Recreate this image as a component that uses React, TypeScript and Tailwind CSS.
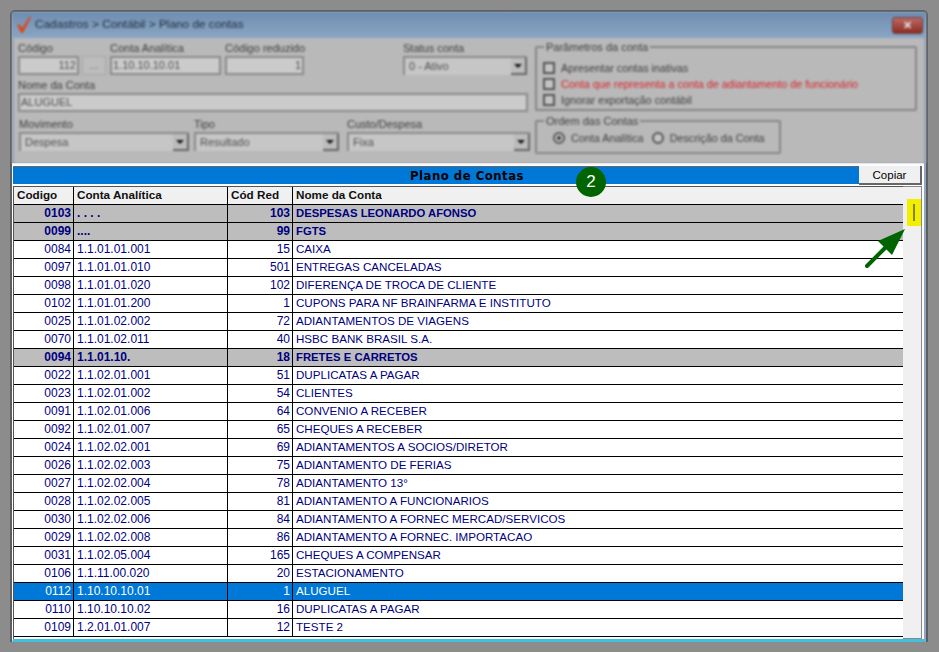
const rows: [string, string, string, string, string?][] = [
  ["0103", ". . . .", "103", "DESPESAS LEONARDO AFONSO", "b"],
  ["0099", "....", "99", "FGTS", "b"],
  ["0084", "1.1.01.01.001", "15", "CAIXA"],
  ["0097", "1.1.01.01.010", "501", "ENTREGAS CANCELADAS"],
  ["0098", "1.1.01.01.020", "102", "DIFERENÇA DE TROCA DE CLIENTE"],
  ["0102", "1.1.01.01.200", "1", "CUPONS PARA NF BRAINFARMA E INSTITUTO"],
  ["0025", "1.1.01.02.002", "72", "ADIANTAMENTOS DE VIAGENS"],
  ["0070", "1.1.01.02.011", "40", "HSBC BANK BRASIL S.A."],
  ["0094", "1.1.01.10.", "18", "FRETES E CARRETOS", "b"],
  ["0022", "1.1.02.01.001", "51", "DUPLICATAS A PAGAR"],
  ["0023", "1.1.02.01.002", "54", "CLIENTES"],
  ["0091", "1.1.02.01.006", "64", "CONVENIO A RECEBER"],
  ["0092", "1.1.02.01.007", "65", "CHEQUES A RECEBER"],
  ["0024", "1.1.02.02.001", "69", "ADIANTAMENTOS A SOCIOS/DIRETOR"],
  ["0026", "1.1.02.02.003", "75", "ADIANTAMENTO DE FERIAS"],
  ["0027", "1.1.02.02.004", "78", "ADIANTAMENTO 13°"],
  ["0028", "1.1.02.02.005", "81", "ADIANTAMENTO A FUNCIONARIOS"],
  ["0030", "1.1.02.02.006", "84", "ADIANTAMENTO A FORNEC MERCAD/SERVICOS"],
  ["0029", "1.1.02.02.008", "86", "ADIANTAMENTO A FORNEC. IMPORTACAO"],
  ["0031", "1.1.02.05.004", "165", "CHEQUES A COMPENSAR"],
  ["0106", "1.1.11.00.020", "20", "ESTACIONAMENTO"],
  ["0112", "1.10.10.10.01", "1", "ALUGUEL", "s"],
  ["0110", "1.10.10.10.02", "16", "DUPLICATAS A PAGAR"],
  ["0109", "1.2.01.01.007", "12", "TESTE 2"],
];

function Field({ label, value, right, className }: { label: string; value: string; right?: boolean; className: string }) {
  return (
    <div className={className}>
      <div className="h-[14px] whitespace-nowrap text-[11px] leading-[13px] text-[#3d3d3d]">{label}</div>
      <div className={`flex h-[19px] items-center border-2 border-[#8a8a8a] bg-[#cbcbcb] px-[1px] text-[11px] text-[#505050] ${right ? "justify-end" : ""}`}>
        {value}
      </div>
    </div>
  );
}

function Combo({ label, value, className }: { label: string; value: string; className: string }) {
  return (
    <div className={className}>
      <div className="h-[14px] whitespace-nowrap text-[11px] leading-[13px] text-[#3d3d3d]">{label}</div>
      <div className="flex h-[19px] items-center border-t-2 border-l-2 border-[#8a8a8a] bg-[#c6c6c6] pl-1 text-[11px] text-[#505050]">
        <span className="flex-1">{value}</span>
        <span className="flex h-[17px] w-[16px] items-center justify-center border-r-2 border-b-2 border-[#666] bg-[#bcbcbc]">
          <span className="h-0 w-0 border-x-[4px] border-t-[4px] border-x-transparent border-t-[#111]" />
        </span>
      </div>
    </div>
  );
}

function Check({ label, red }: { label: string; red?: boolean }) {
  return (
    <div className="flex h-[16px] items-center gap-[6px]">
      <span className="h-[12px] w-[12px] border-2 border-[#555] bg-[#c4c4c4]" />
      <span className={`whitespace-nowrap text-[10.8px] ${red ? "text-[#d9232e]" : "text-[#3d3d3d]"}`}>{label}</span>
    </div>
  );
}

function Radio({ label, on }: { label: string; on?: boolean }) {
  return (
    <div className="flex items-center gap-[6px]">
      <span className="flex h-[12px] w-[12px] items-center justify-center rounded-full border-2 border-[#555] bg-[#c4c4c4]">
        {on && <span className="h-[4px] w-[4px] rounded-full bg-[#333]" />}
      </span>
      <span className="whitespace-nowrap text-[10.8px] text-[#3d3d3d]">{label}</span>
    </div>
  );
}

const cols = "grid grid-cols-[60px_154px_65px_610px]";

export default function App() {
  return (
    <div className="relative h-[652px] w-[939px] overflow-hidden bg-[#8c8c8c] pl-[10px] pt-[10px] font-['Liberation_Sans',Arial,sans-serif]">
      <div className="flex h-[632px] w-[918px] flex-col rounded-t-[5px] border-2 border-b-0 border-[#5e5e5e] bg-[#8fa9c4]">
        <div className="blur-[1px]">
          {/* barra de titulo */}
          <div className="flex h-[26px] items-center bg-gradient-to-b from-[#6f8db0] to-[#8ba6c3] pl-[4px] pr-[3px]">
            <svg width="16" height="18" viewBox="0 0 16 18" className="mr-[3px]">
              <path d="M1 9 L3.5 8 L6 12 L13.5 0.5 L15 1 L7 17 L5 17 Z" fill="#d9481c" />
            </svg>
            <span className="flex-1 text-[11.8px] font-medium text-[#1c2c3e]">Cadastros &gt; Contábil &gt; Plano de contas</span>
            <span className="flex h-[17px] w-[31px] items-center justify-center rounded-[3px] border border-[#6d3b3b] bg-gradient-to-b from-[#b96a64] to-[#8d2b22] text-[11px] font-bold leading-none text-[#e8e8e8]">
              ✕
            </span>
          </div>
          {/* filtros */}
          <div className="flex h-[125px] gap-[5px] border-x-2 border-[#9aa5b0] bg-[#b9b9b9] pl-[4px] pt-[4px]">
            <div className="flex w-[512px] flex-col">
              <div className="flex h-[33px] items-start">
                <Field label="Código" value="112" right className="w-[61px]" />
                <div className="ml-[3px] mt-[14px] flex h-[19px] w-[24px] items-center justify-center border border-[#a5a5a5] bg-[#bdbdbd] text-[11px] text-[#777]">...</div>
                <Field label="Conta Analítica" value="1.10.10.10.01" className="ml-[4px] w-[111px]" />
                <Field label="Código reduzido" value="1" right className="ml-[4px] w-[79px]" />
                <Combo label="Status conta" value="0 - Ativo" className="ml-[99px] w-[124px]" />
              </div>
              <Field label="Nome da Conta" value="ALUGUEL" className="mt-[4px] w-[510px]" />
              <div className="mt-[6px] flex pl-[1px]">
                <Combo label="Movimento" value="Despesa" className="w-[170px]" />
                <Combo label="Tipo" value="Resultado" className="ml-[5px] w-[145px]" />
                <Combo label="Custo/Despesa" value="Fixa" className="ml-[8px] w-[183px]" />
              </div>
            </div>
            <div className="-mt-[1px] flex flex-col">
              <fieldset className="h-[70px] w-[382px] rounded-[2px] border-2 border-[#858585] pl-[6px]">
                <legend className="ml-[1px] px-[2px] text-[11px] leading-[12px] text-[#3d3d3d]">Parâmetros da conta</legend>
                <div className="mt-[7px]">
                  <Check label="Apresentar contas inativas" />
                  <Check label="Conta que representa a conta de adiantamento de funcionário" red />
                  <Check label="Ignorar exportação contábil" />
                </div>
              </fieldset>
              <fieldset className="mt-[4px] h-[39px] w-[246px] rounded-[2px] border-2 border-[#858585] pl-[16px]">
                <legend className="ml-[-9px] px-[2px] text-[11px] leading-[12px] text-[#3d3d3d]">Ordem das Contas</legend>
                <div className="mt-[3px] flex gap-[8px]">
                  <Radio label="Conta Analítica" on />
                  <Radio label="Descrição da Conta" />
                </div>
              </fieldset>
            </div>
          </div>
        </div>

        {/* grade */}
        <div className="flex flex-1 flex-col border-b-[3px] border-l border-r-2 border-b-[#3fc0dc] border-l-white border-r-[#8fa9c4] bg-white pt-[3px]">
          <div className="flex h-[20px] w-[910px]">
            <div className="flex h-[18px] w-[846px] items-center justify-center border-t border-[#666] bg-[#0078d7] pl-[62px] pt-[2px] font-['DejaVu_Sans',sans-serif] text-[11.7px] font-bold tracking-[0.5px] text-black">
              Plano de Contas
            </div>
            <div className="flex h-[19px] w-[63px] items-center justify-center border-r-2 border-b-2 border-[#666] bg-[#f0f0f0] pt-[2px] text-[11.5px] text-black">
              Copiar
            </div>
          </div>
          <div className="flex min-h-0 w-[909px] flex-1">
            <div className="w-[890px] border-l border-t border-[#555]">
              <div className={`${cols} h-[18px] border-b border-black bg-[#f0f0f0] text-[11.7px] font-bold leading-[16px] text-[#111]`}>
                <div className="border-r border-black pl-[3px]">Codigo</div>
                <div className="border-r border-black pl-[3px]">Conta Analítica</div>
                <div className="border-r border-black pl-[3px]">Cód Red</div>
                <div className="pl-[3px]">Nome da Conta</div>
              </div>
              {rows.map(([code, acc, red, name, kind]) => {
                const rowColor =
                  kind === "s"
                    ? "bg-[#0078d7] text-white"
                    : kind === "b"
                      ? "bg-[#bdbdbd] font-bold text-[#000080]"
                      : "bg-white text-[#000080]";
                return (
                  <div key={code} className={`${cols} h-[18px] border-b border-black text-[12px] leading-[17px] ${rowColor}`}>
                    <div className="border-r border-black pr-[2px] text-right">{code}</div>
                    <div className="border-r border-black pl-[3px]">{acc}</div>
                    <div className="border-r border-black pr-[2px] text-right">{red}</div>
                    <div className={`whitespace-nowrap pl-[3px] leading-[16px] ${kind === "b" ? "text-[11.3px]" : "text-[11.6px]"}`}>{name}</div>
                  </div>
                );
              })}
            </div>
            <div className="flex-1 border-y border-r border-l-0 border-[#888] bg-[#f0f0f0]" />
          </div>
        </div>
      </div>

      {/* anotacoes */}
      <div className="absolute left-[907px] top-[199px] flex h-[27px] w-[14px] items-center justify-center bg-[#f2ee00]">
        <span className="h-[17px] w-[2px] bg-[#8a8500]" />
      </div>
      <svg className="absolute left-[860px] top-[222px]" width="50" height="52" viewBox="0 0 50 52">
        <path d="M7 44 L25 26" stroke="#006400" strokeWidth="4" strokeLinecap="round" />
        <path d="M45 7 L18 19 L32 33 Z" fill="#006400" />
      </svg>
      <div className="absolute left-[576px] top-[167px] flex h-[30px] w-[30px] items-center justify-center rounded-full bg-[#006400] text-[17px] text-white">
        2
      </div>
    </div>
  );
}
